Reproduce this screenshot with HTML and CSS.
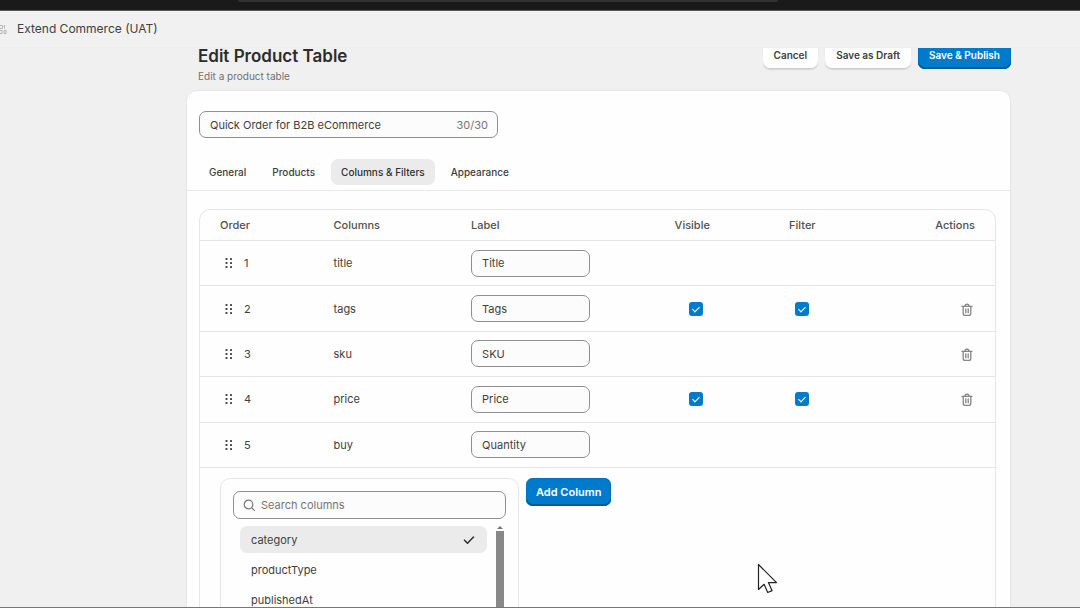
FILE: index.html
```html
<!DOCTYPE html>
<html lang="en">
<head>
<meta charset="utf-8">
<meta name="viewport" content="width=device-width, initial-scale=1">
<title>Edit Product Table</title>
<link rel="stylesheet" href="styles.css">
</head>
<body>
<svg class="sprite" aria-hidden="true">
  <symbol id="grip" viewBox="0 0 8 12"><g fill="#4a4a4a"><rect x="0.5" y="1" width="2" height="2" rx=".6"/><rect x="5" y="1" width="2" height="2" rx=".6"/><rect x="0.5" y="5" width="2" height="2" rx=".6"/><rect x="5" y="5" width="2" height="2" rx=".6"/><rect x="0.5" y="9" width="2" height="2" rx=".6"/><rect x="5" y="9" width="2" height="2" rx=".6"/></g></symbol>
  <symbol id="trash" viewBox="0 0 12 14"><g fill="none" stroke="#858585" stroke-width="1.3" stroke-linecap="round"><path d="M1 3.4h10"/><path d="M4 3.2c0-2.6 4-2.6 4 0"/><path d="M2.2 3.6v6.6c0 1.6.6 2.2 2 2.2h3.6c1.4 0 2-.6 2-2.2V3.6"/><path d="M4.8 5.8v4M7.2 5.8v4"/></g></symbol>
</svg>
<div class="app">
  <div class="browser-bar"><div class="browser-search"></div></div>
  <header class="store-bar">
    <svg class="store-icon" width="7" height="12" viewBox="0 0 7 12" aria-hidden="true"><g fill="none" stroke="#b4b4b4"><path d="M0 2.5h2.5v3H0M4.5 2v3.5M0 7.5h2v3H0M4 10.5v-3h2v3z"/></g></svg>
    <span>Extend Commerce (UAT)</span>
  </header>
  <main class="viewport">
    <div class="page-head">
      <div>
        <h1>Edit Product Table</h1>
        <p>Edit a product table</p>
      </div>
      <div class="actions">
        <button class="btn small" type="button">Cancel</button>
        <button class="btn small" type="button">Save as Draft</button>
        <button class="btn small primary" type="button">Save &amp; Publish</button>
      </div>
    </div>
    <section class="card">
      <div class="name-field field">
        <input type="text" aria-label="Table name" maxlength="30" value="Quick Order for B2B eCommerce">
        <span class="count">30/30</span>
      </div>
      <nav class="tabs" role="tablist">
        <button type="button" role="tab">General</button>
        <button type="button" role="tab">Products</button>
        <button type="button" role="tab" class="active" aria-selected="true">Columns &amp; Filters</button>
        <button type="button" role="tab">Appearance</button>
      </nav>
      <div class="panel">
        <table class="columns">
          <colgroup><col class="c-order"><col class="c-name"><col class="c-label"><col class="c-visible"><col class="c-filter"><col></colgroup>
          <thead>
            <tr><th>Order</th><th>Columns</th><th>Label</th><th>Visible</th><th>Filter</th><th>Actions</th></tr>
          </thead>
          <tbody>
            <tr><td><span class="order"><svg width="8" height="12"><use href="#grip"/></svg>1</span></td><td>title</td><td><input class="field label-input" type="text" aria-label="Label for title" value="Title"></td><td></td><td></td><td></td></tr>
            <tr><td><span class="order"><svg width="8" height="12"><use href="#grip"/></svg>2</span></td><td>tags</td><td><input class="field label-input" type="text" aria-label="Label for tags" value="Tags"></td><td><input type="checkbox" aria-label="tags visible" checked></td><td><input type="checkbox" aria-label="tags filter" checked></td><td><button class="icon-btn" type="button" aria-label="Delete tags"><svg width="12" height="14"><use href="#trash"/></svg></button></td></tr>
            <tr><td><span class="order"><svg width="8" height="12"><use href="#grip"/></svg>3</span></td><td>sku</td><td><input class="field label-input" type="text" aria-label="Label for sku" value="SKU"></td><td></td><td></td><td><button class="icon-btn" type="button" aria-label="Delete sku"><svg width="12" height="14"><use href="#trash"/></svg></button></td></tr>
            <tr><td><span class="order"><svg width="8" height="12"><use href="#grip"/></svg>4</span></td><td>price</td><td><input class="field label-input" type="text" aria-label="Label for price" value="Price"></td><td><input type="checkbox" aria-label="price visible" checked></td><td><input type="checkbox" aria-label="price filter" checked></td><td><button class="icon-btn" type="button" aria-label="Delete price"><svg width="12" height="14"><use href="#trash"/></svg></button></td></tr>
            <tr><td><span class="order"><svg width="8" height="12"><use href="#grip"/></svg>5</span></td><td>buy</td><td><input class="field label-input" type="text" aria-label="Label for buy" value="Quantity"></td><td></td><td></td><td></td></tr>
          </tbody>
        </table>
        <div class="add-row">
          <div class="picker">
            <label class="field search">
              <svg width="13" height="13" viewBox="0 0 13 13" aria-hidden="true"><g fill="none" stroke="#777" stroke-width="1.2" stroke-linecap="round"><circle cx="5.5" cy="5.5" r="4.3"/><path d="M8.8 8.8l2.6 2.6"/></g></svg>
              <input type="text" aria-label="Search columns" placeholder="Search columns">
            </label>
            <div class="list-wrap">
              <ul class="options" role="listbox" aria-label="Columns">
                <li role="option" aria-selected="true">category<svg width="12" height="10" viewBox="0 0 12 10" aria-hidden="true"><path d="M1.5 5.2l3 3L10.5 2" fill="none" stroke="#333" stroke-width="1.6" stroke-linecap="round" stroke-linejoin="round"/></svg></li>
                <li role="option">productType</li>
                <li role="option">publishedAt</li>
              </ul>
              <div class="scrollbar"><svg width="6" height="3" viewBox="0 0 6 3" aria-hidden="true"><path d="M0 3l3-3 3 3z" fill="#777"/></svg><div class="thumb"></div></div>
            </div>
          </div>
          <button class="btn primary" type="button">Add Column</button>
        </div>
      </div>
    </section>
  </main>
  <svg class="cursor" width="22" height="32" viewBox="0 0 22 32" aria-hidden="true"><path d="M1.5 1.5v25l5.6-5.2 3.6 8.2 4.3-1.9-3.6-8h8.1z" fill="#fff" stroke="#222" stroke-width="1.2" stroke-linejoin="round"/></svg>
</div>
</body>
</html>
```
FILE: styles.css
```css
* { box-sizing: border-box; }
body {
  margin: 0;
  font-family: Inter, "Liberation Sans", sans-serif;
  font-size: 11px;
  line-height: 16px;
  color: #404040;
  background: #f0f0f0;
}
button, input { font: inherit; color: inherit; }
h1, p, ul { margin: 0; padding: 0; }
.sprite { position: absolute; width: 0; height: 0; }
.app {
  position: relative;
  display: flex;
  flex-direction: column;
  height: 100vh;
  overflow: hidden;
  border-bottom: 1px solid #777;
}
.browser-bar {
  flex: none;
  height: 11px;
  padding: 0 28% 0 22%;
  background: #1a1a1a;
  border-bottom: 1px solid #5c5c5c;
}
.browser-search { height: 2px; background: #333; border-radius: 0 0 4px 4px; }
.store-bar {
  flex: none;
  display: flex;
  align-items: center;
  gap: 10px;
  height: 37px;
  font-size: 12px;
  background: #f1f1f1;
  border-bottom: 1px solid #ededed;
}
.viewport {
  flex: 1;
  min-height: 0;
  overflow: hidden;
  padding: 0 69px 0 186px;
}
.page-head {
  display: flex;
  justify-content: space-between;
  align-items: flex-start;
  margin-top: -7px;
  padding: 0 0 6px 12px;
}
h1 { padding-top: 5px; font-size: 17px; line-height: 20px; font-weight: 600; color: #2c2c2c; }
.page-head p { padding-top: 2px; font-size: 10px; color: #707070; }
.actions { display: flex; gap: 7px; }
.btn {
  height: 28px;
  padding: 0 10px;
  border: 0;
  border-radius: 7px;
  background: #fff;
  line-height: 16px;
  font-weight: 600;
  box-shadow: inset 0 -1px #ccc, 0 1px 1px #d8d8d8;
}
.btn.small { padding: 0 11px; font-size: 10px; }
.btn.primary {
  color: #fff;
  background: #007bcb;
  box-shadow: inset 0 -2px #005a96, inset 0 0 0 1px #0070ba;
}
.card {
  padding-top: 20px;
  background: #fefefe;
  border: 1px solid #e6e6e6;
  border-radius: 11px 11px 0 0;
}
.field {
  height: 27px;
  border: 1px solid #8f8f8f;
  border-radius: 7px;
  background: #fcfcfc;
}
.name-field {
  display: flex;
  align-items: center;
  width: 299px;
  margin-left: 12px;
  padding: 0 9px 0 10px;
}
.name-field input, .search input {
  flex: 1;
  min-width: 0;
  padding: 0;
  border: 0;
  outline: 0;
  background: none;
}
.count { color: #777; }
.tabs {
  display: flex;
  gap: 6px;
  padding: 21px 12px 5px;
  border-bottom: 1px solid #e9e9e9;
}
.tabs button {
  height: 26px;
  padding: 0 10px;
  border: 0;
  border-radius: 7px;
  background: none;
  font-size: 10px;
  font-weight: 500;
}
.tabs .active { background: #ebebeb; color: #303030; }
.panel {
  margin: 18px 14px 0 12px;
  border: 1px solid #e6e6e6;
  border-radius: 11px 11px 0 0;
}
.columns {
  width: 100%;
  height: 258px;
  table-layout: fixed;
  border-collapse: separate;
  border-spacing: 0;
}
.c-order { width: 16.8%; }
.c-name { width: 17.3%; }
.c-label { width: 25.6%; }
.c-visible { width: 14.4%; }
.c-filter { width: 11%; }
th, td { padding: 0; text-align: left; border-bottom: 1px solid #e4e4e4; }
th { height: 31px; font-weight: 500; color: #505050; }
th:first-child, td:first-child { padding-left: 20px; }
th:last-child { padding-right: 20px; text-align: right; }
td:last-child { padding-right: 22px; text-align: right; }
td:nth-child(4) { padding-left: 14px; }
td:nth-child(5) { padding-left: 6px; }
.order { display: flex; align-items: center; gap: 11px; padding-left: 5px; }
.label-input { display: block; width: 119px; padding: 0 10px; }
input[type="checkbox"] {
  display: block;
  appearance: none;
  width: 14px;
  height: 14px;
  margin: 0;
  border-radius: 3px;
  background: #007bcb;
}
input[type="checkbox"]::before {
  content: "";
  display: block;
  width: 3px;
  height: 6px;
  margin: 3px auto 0;
  border: solid #fff;
  border-width: 0 1px 1px 0;
  box-sizing: content-box;
  transform: rotate(45deg);
}
.icon-btn { padding: 0; border: 0; background: none; line-height: 0; vertical-align: middle; }
.add-row { display: flex; align-items: flex-start; gap: 7px; padding: 10px 20px 0; }
.picker {
  width: 299px;
  height: 180px;
  padding: 12px 12px 0;
  border: 1px solid #e6e6e6;
  border-radius: 10px;
}
.search { display: flex; align-items: center; gap: 5px; height: 28px; padding: 0 9px; }
.search input::placeholder { color: #757575; opacity: 1; }
.list-wrap { display: flex; gap: 9px; padding: 7px 2px 0 7px; }
.options { flex: 1; display: grid; gap: 3px; list-style: none; }
.options li {
  display: flex;
  align-items: center;
  justify-content: space-between;
  height: 27px;
  padding: 0 12px 0 11px;
  border-radius: 7px;
}
.options li[aria-selected="true"] { background: #ebebeb; }
.scrollbar { display: flex; flex-direction: column; align-items: center; gap: 2px; width: 8px; }
.thumb { flex: 1; width: 8px; background: #888; }
.cursor { position: absolute; left: 757px; top: 563px; }
```
